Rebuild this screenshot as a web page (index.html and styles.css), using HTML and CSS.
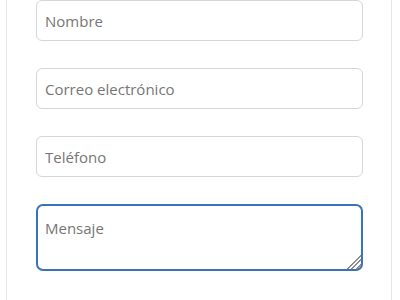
FILE: index.html
```html
<!DOCTYPE html>
<html lang="es">
<head>
<meta charset="utf-8">
<title>Contacto</title>
<link rel="stylesheet" href="styles.css">
</head>
<body>
<div class="card">
  <form class="form">
    <input class="field" type="text" placeholder="Nombre">
    <input class="field" type="email" placeholder="Correo electrónico">
    <input class="field" type="tel" placeholder="Teléfono">
    <textarea class="field area active" placeholder="Mensaje" autofocus></textarea>
  </form>
</div>
</body>
</html>
```

FILE: styles.css
```css
html, body {
  margin: 0;
  padding: 0;
  background: #ffffff;
  overflow: hidden;
}

.card {
  margin: -20px 0 0 6px;
  width: 386px;
  height: 360px;
  border: 1px solid #e6e6e6;
  box-sizing: border-box;
  padding: 20px 29px 0 29px;
}

.form {
  display: flex;
  flex-direction: column;
  gap: 28px;
}

.field {
  display: block;
  width: 327px;
  height: 41px;
  box-sizing: border-box;
  margin: -1px 0 0 0;
  border: 1px solid #d6d6d6;
  border-radius: 6px;
  padding: 0 8px;
  font-family: "Open Sans", "Noto Sans", sans-serif;
  font-size: 15px;
  color: #333;
  background: #fff;
  outline: none;
}

.field::placeholder {
  color: #767676;
  opacity: 1;
}

.area {
  height: 67px;
  margin-top: -1px;
  padding: 12px 7px;
  line-height: 20px;
  resize: vertical;
}

.area::-webkit-resizer {
  background: linear-gradient(135deg, transparent 50%, #8c8c8c 50%, #8c8c8c 57%, transparent 57%, transparent 66%, #8c8c8c 66%, #8c8c8c 73%, transparent 73%, transparent 82%, #8c8c8c 82%, #8c8c8c 89%, transparent 89%);
}

.active {
  border: 2px solid #3a73b9;
  border-radius: 7px;
}
```
